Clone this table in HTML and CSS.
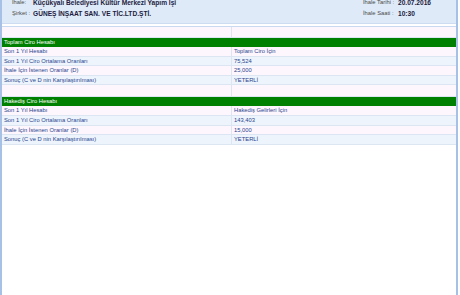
FILE: index.html
```html
<!DOCTYPE html>
<html lang="tr">
<head>
<meta charset="utf-8">
<link rel="stylesheet" href="styles.css">
</head>
<body>
<div class="frame">
  <div class="header">
    <div class="hrow first">
      <div class="hleft"><span class="hlabel">İhale:</span><span class="hvalue">Küçükyalı Belediyesi Kültür Merkezi Yapım İşi</span></div>
      <div class="hright"><span class="rlabel">İhale Tarihi :</span><span class="hvalue">20.07.2016</span></div>
    </div>
    <div class="hrow">
      <div class="hleft"><span class="hlabel">Şirket :</span><span class="hvalue">GÜNEŞ İNŞAAT SAN. VE TİC.LTD.ŞTİ.</span></div>
      <div class="hright"><span class="rlabel">İhale Saati :</span><span class="hvalue">10:30</span></div>
    </div>
  </div>
  <div class="grid">
    <div class="row blank"><div class="c1"></div><div class="c2"></div></div>
    <div class="row green"><div class="c1">Toplam Ciro Hesabı</div><div class="c2"></div></div>
    <div class="row a"><div class="c1">Son 1 Yıl Hesabı</div><div class="c2">Toplam Ciro İçin</div></div>
    <div class="row b"><div class="c1">Son 1 Yıl Ciro Ortalama Oranları</div><div class="c2">75,524</div></div>
    <div class="row a"><div class="c1">İhale İçin İstenen Oranlar (D)</div><div class="c2">25,000</div></div>
    <div class="row b"><div class="c1">Sonuç (C ve D nin Karşılaştırılması)</div><div class="c2">YETERLİ</div></div>
    <div class="row blank tall"><div class="c1"></div><div class="c2"></div></div>
    <div class="row green"><div class="c1">Hakediş Ciro Hesabı</div><div class="c2"></div></div>
    <div class="row a"><div class="c1">Son 1 Yıl Hesabı</div><div class="c2">Hakediş Gelirleri İçin</div></div>
    <div class="row b"><div class="c1">Son 1 Yıl Ciro Ortalama Oranları</div><div class="c2">143,403</div></div>
    <div class="row a"><div class="c1">İhale İçin İstenen Oranlar (D)</div><div class="c2">15,000</div></div>
    <div class="row b"><div class="c1">Sonuç (C ve D nin Karşılaştırılması)</div><div class="c2">YETERLİ</div></div>
  </div>
</div>
</body>
</html>
```
FILE: styles.css
```css
html, body {
  margin: 0;
  padding: 0;
  background: #ffffff;
  overflow: hidden;
}
body {
  font-family: "Liberation Sans", Arial, sans-serif;
  font-size: 5.8px;
}
.frame {
  width: 458px;
  height: 295px;
  border-left: 2px solid #a7c1e6;
  border-right: 2px solid #a7c1e6;
  box-sizing: border-box;
  background: #ffffff;
}
.header {
  height: 24px;
  background: #dfeaf8;
  border-bottom: 1px solid #cddcf0;
  box-sizing: border-box;
  overflow: hidden;
}
.hrow {
  display: flex;
  height: 11.5px;
  line-height: 11.5px;
}
.hrow.first {
  margin-top: -3.5px;
}
.hleft {
  width: 351px;
  padding-left: 10px;
  box-sizing: border-box;
  display: flex;
}
.hright {
  display: flex;
  padding-left: 10px;
}
.hlabel {
  width: 21px;
  color: #4a4a4a;
}
.rlabel {
  width: 35px;
  color: #4a4a4a;
}
.hvalue {
  font-weight: bold;
  font-size: 6.6px;
  color: #1b1b40;
}
.grid {
  margin-top: 2px;
  border-top: 1px solid #c9d9ef;
}
.row {
  display: grid;
  grid-template-columns: 230px 1fr;
  height: 9.6px;
  line-height: 9px;
  box-sizing: border-box;
  border-bottom: 1px solid #dce6f3;
  color: #2a4590;
}
.row .c1 {
  padding-left: 2px;
  border-right: 1px solid #dce6f3;
  white-space: nowrap;
}
.row .c2 {
  padding-left: 2px;
  white-space: nowrap;
}
.row.blank {
  height: 11px;
  background: #fdf6fc;
}
.row.blank.tall {
  height: 12px;
}
.row.green {
  height: 9px;
  background: #008000;
  color: #ffffff;
  border-bottom: none;
}
.row.green .c1 {
  border-right: none;
}
.row.a {
  background: #fdf6fc;
}
.row.b {
  background: #eef4fb;
}
```
